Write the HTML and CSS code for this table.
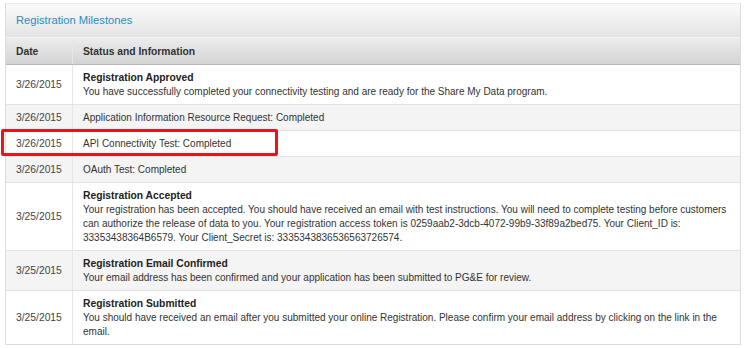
FILE: index.html
```html
<!DOCTYPE html>
<html lang="en">
<head>
    <meta charset="UTF-8">
    <title>Registration Milestones</title>
    <link rel="stylesheet" href="styles.css">
</head>
<body>
<div class="panel">
    <div class="panel-title">Registration Milestones</div>
    <table class="milestones">
        <thead>
        <tr>
            <th class="col-date">Date</th>
            <th>Status and Information</th>
        </tr>
        </thead>
        <tbody>
        <tr>
            <td class="col-date">3/26/2015</td>
            <td><strong>Registration Approved</strong><br>You have successfully completed your connectivity testing and are ready for the Share My Data program.</td>
        </tr>
        <tr>
            <td class="col-date">3/26/2015</td>
            <td>Application Information Resource Request: Completed</td>
        </tr>
        <tr>
            <td class="col-date">3/26/2015</td>
            <td>API Connectivity Test: Completed</td>
        </tr>
        <tr>
            <td class="col-date">3/26/2015</td>
            <td>OAuth Test: Completed</td>
        </tr>
        <tr>
            <td class="col-date">3/25/2015</td>
            <td><strong>Registration Accepted</strong><br>Your registration has been accepted. You should have received an email with test instructions. You will need to complete testing before customers can authorize the release of data to you. Your registration access token is 0259aab2-3dcb-4072-99b9-33f89a2bed75. Your Client_ID is: 33353438364B6579. Your Client_Secret is: 3335343836536563726574.</td>
        </tr>
        <tr>
            <td class="col-date">3/25/2015</td>
            <td><strong>Registration Email Confirmed</strong><br>Your email address has been confirmed and your application has been submitted to PG&amp;E for review.</td>
        </tr>
        <tr>
            <td class="col-date">3/25/2015</td>
            <td><strong>Registration Submitted</strong><br>You should have received an email after you submitted your online Registration. Please confirm your email address by clicking on the link in the email.</td>
        </tr>
        </tbody>
    </table>
</div>
<div class="highlight"></div>
</body>
</html>
```

FILE: styles.css
```css
body {
    margin: 0;
    background-color: #fff;
    color: #333;
    font-family: "Liberation Sans", Arial, sans-serif;
    font-size: 10px;
    position: relative;
}
.panel {
    margin: 3px 4px 0 5px;
    border: 1px solid #dcdcdc;
    border-top-color: #ececec;
}
.panel-title {
    height: 33px;
    line-height: 33px;
    padding-left: 10px;
    font-size: 11.2px;
    color: #2b8cc4;
    background: linear-gradient(#fbfbfb, #e3e3e3);
    border-bottom: 1px solid #f4f4f4;
}
.milestones {
    width: 100%;
    border-collapse: collapse;
}
.milestones th {
    height: 26px;
    padding: 0 10px;
    text-align: left;
    font-weight: bold;
    font-size: 10.3px;
    color: #333;
    background: linear-gradient(#ececec, #d3d3d3);
    border-bottom: 1px solid #b8b8b8;
    border-left: 1px solid #e6e6e6;
}
.milestones td {
    padding: 6px 6px 5px 10px;
    line-height: 14px;
    vertical-align: middle;
    border-bottom: 1px solid #e2e2e2;
    border-left: 1px solid #e6e6e6;
}
.milestones th:first-child,
.milestones td:first-child {
    border-left: none;
}
.milestones td.col-date {
    width: 50px;
    font-size: 10.3px;
    color: #444;
}
.milestones tbody tr:nth-child(even) td {
    background-color: #f4f4f4;
}
.milestones tbody tr:last-child td {
    border-bottom: none;
}
.milestones th.col-date {
    width: 46px;
}
.milestones strong {
    font-size: 10.3px;
    color: #222;
}
.highlight {
    position: absolute;
    left: 1px;
    top: 129px;
    width: 271px;
    height: 21px;
    border: 3px solid #e8141b;
    border-radius: 2px;
}
```
